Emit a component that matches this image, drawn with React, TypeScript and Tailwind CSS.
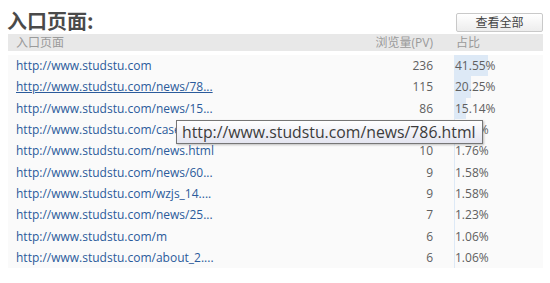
import React from "react";

const rows: { url: string; pv: number; pct: string; v: number; hover?: boolean }[] = [
  { url: "http://www.studstu.com", pv: 236, pct: "41.55%", v: 41.55 },
  { url: "http://www.studstu.com/news/78...", pv: 115, pct: "20.25%", v: 20.25, hover: true },
  { url: "http://www.studstu.com/news/15...", pv: 86, pct: "15.14%", v: 15.14 },
  { url: "http://www.studstu.com/case...", pv: 10, pct: "1.76%", v: 1.76 },
  { url: "http://www.studstu.com/news.html", pv: 10, pct: "1.76%", v: 1.76 },
  { url: "http://www.studstu.com/news/60...", pv: 9, pct: "1.58%", v: 1.58 },
  { url: "http://www.studstu.com/wzjs_14....", pv: 9, pct: "1.58%", v: 1.58 },
  { url: "http://www.studstu.com/news/25...", pv: 7, pct: "1.23%", v: 1.23 },
  { url: "http://www.studstu.com/m", pv: 6, pct: "1.06%", v: 1.06 },
  { url: "http://www.studstu.com/about_2....", pv: 6, pct: "1.06%", v: 1.06 },
];

export default function App() {
  return (
    <div
      className="relative w-[550px] h-[283px] bg-white overflow-hidden"
      style={{ fontFamily: '"Open Sans", "Noto Sans CJK SC", sans-serif' }}
    >
      <div className="flex items-end justify-between pl-[7px] pr-[7px] pt-[10px] h-[33px]">
        <div className="text-[20px] leading-[24px] font-bold text-[#4a4a4a]" style={{ fontFamily: '"Noto Sans CJK SC", sans-serif' }}>
          入口页面:
        </div>
        <button className="w-[87px] h-[19px] mb-[1px] border border-[#c9c9c9] bg-gradient-to-b from-white to-[#ededed] text-[12px] leading-[17px] text-[#444] rounded-[2px]">
          查看全部
        </button>
      </div>
      <div className="mx-[8px] mt-[1px] w-[535px]">
        <div className="grid grid-cols-[1fr_90px_89px] h-[17px] bg-[#e8e8e8] text-[12px] leading-[17px] text-[#9a9a9a]">
          <div className="pl-[8px]">入口页面</div>
          <div className="text-right pr-[21px]">浏览量(PV)</div>
          <div className="pl-[2px]">占比</div>
        </div>
        <div className="mt-[4px] bg-[#fafafa]">
          {rows.map((r, i) => (
            <div key={i} className="grid grid-cols-[1fr_90px_89px] h-[21.33px] text-[12px] leading-[21px]">
              <div className={"pl-[8px] text-[#2b5b9b] " + (r.hover ? "underline" : "")}>{r.url}</div>
              <div className="text-right pr-[21px] text-[#606060]">{r.pv}</div>
              <div className="relative text-[#606060]">
                <div className="absolute left-0 top-0 bottom-0 bg-[#dde9f6]" style={{ width: `${r.v * 0.92}%` }} />
                <span className="relative pl-[1px]">{r.pct}</span>
              </div>
            </div>
          ))}
        </div>
      </div>
      <div
        className="absolute left-[176px] top-[120px] h-[24px] pl-[5px] pr-[6px] border border-[#767676] bg-gradient-to-b from-white to-[#e4e5f0] text-[15.8px] leading-[22px] text-[#3c3c3c] shadow-[1px_1px_2px_rgba(0,0,0,0.25)]"
        style={{ fontFamily: '"Open Sans", sans-serif' }}
      >
        http://www.studstu.com/news/786.html
      </div>
    </div>
  );
}
